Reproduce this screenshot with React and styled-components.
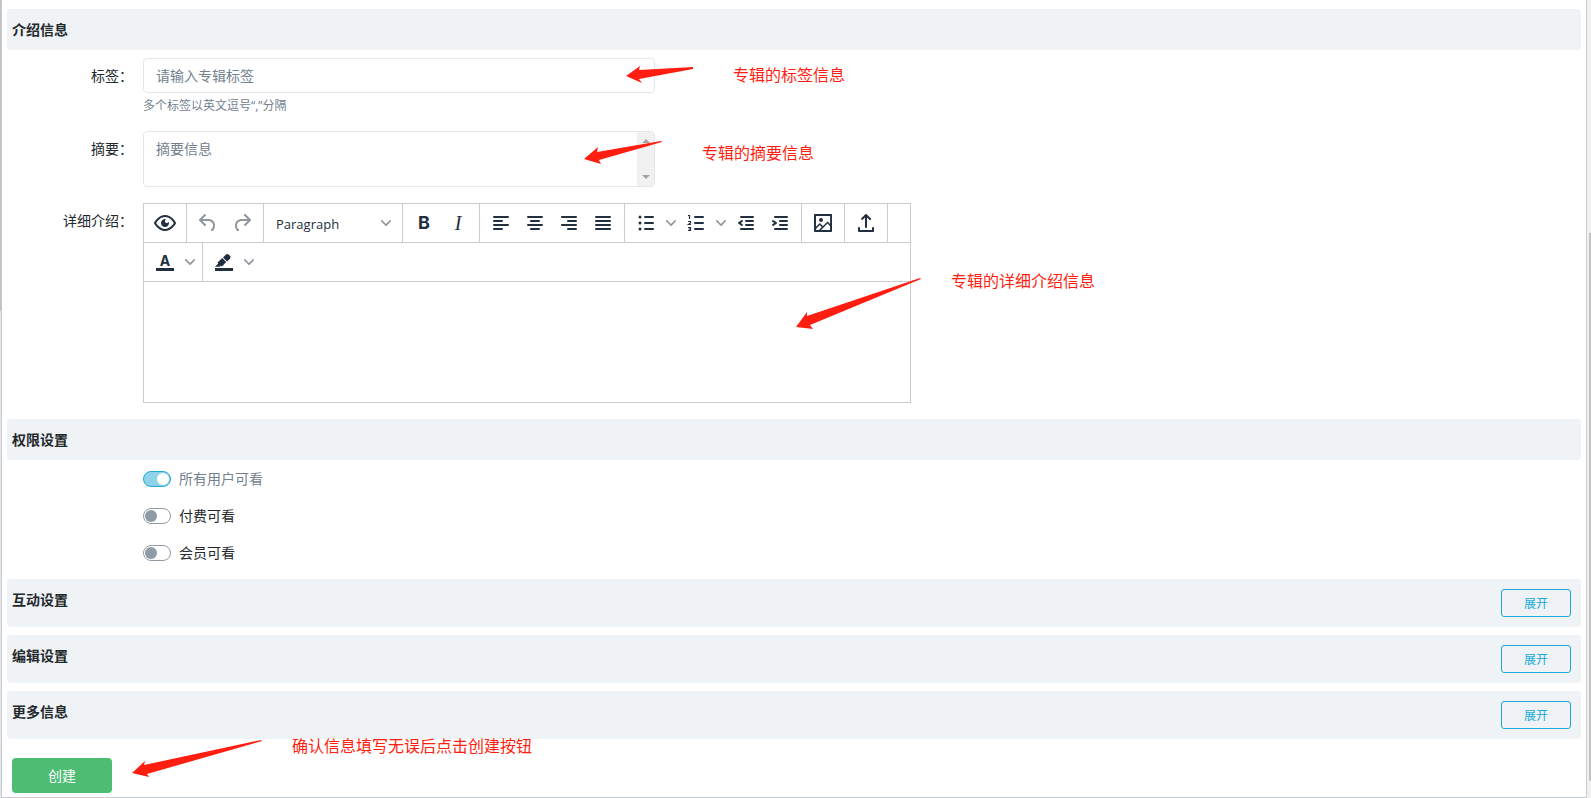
import { useState } from "react";
import styled, { createGlobalStyle } from "styled-components";

const GlobalStyle = createGlobalStyle`
  :root {
    --text: #23282c;
    --muted: #73818f;
    --primary: #20a8d8;
    --success: #4dbd74;
    --bar: #eff3f6;
    --field-border: #e4e7ea;
    --editor-border: #cccccc;
    --editor-icon: #222f3e;
    --note: #ff1e10;
  }
  * {
    box-sizing: border-box;
  }
  body {
    margin: 0;
    background: #ffffff;
    color: var(--text);
    font-family: "Noto Sans CJK SC", sans-serif;
    font-size: 14px;
    line-height: 21px;
  }
  button, input, textarea, select {
    font: inherit;
    color: inherit;
  }
`;

const Page = styled.div`
  display: flex;
  min-height: 100vh;
`;

const Panel = styled.main`
  flex: 1;
  min-width: 0;
  padding: 9px 5px 4px;
  border: 1px solid #c8ccd2;
  border-top: 0;
`;

const MenuRail = styled.div`
  width: 1px;
  padding-bottom: 487px;
  background: #e4e7ea;
  display: flex;
`;

const ScrollRail = styled.div`
  width: 4px;
  padding: 233px 0 17px 2px;
  background: #f0f0f0;
  display: flex;
`;

const ScrollThumb = styled.div`
  flex: 1;
  background: #c1c1c1;
`;

const SectionBar = styled.header`
  display: flex;
  justify-content: space-between;
  align-items: flex-start;
  padding: 10px 10px 10px 5px;
  margin-bottom: 8px;
  border-radius: 4px;
  background: var(--bar);
`;

const SectionTitle = styled.h2`
  margin: 0;
  font-size: 14px;
  font-weight: 700;
  line-height: 21px;
`;

const ExpandButton = styled.button`
  width: 70px;
  height: 28px;
  padding: 0;
  font-size: 12px;
  line-height: 18px;
  color: var(--primary);
  background: transparent;
  border: 1px solid var(--primary);
  border-radius: 3px;
`;

const Row = styled.div`
  display: grid;
  grid-template-columns: 126px minmax(0, 1fr);
  column-gap: 10px;
  margin-bottom: 16px;
`;

const RowLabel = styled.label`
  padding-top: 7px;
  text-align: right;
`;

const Field = styled.div`
  position: relative;
  grid-column: 2;
`;

const TextInput = styled.input`
  display: block;
  width: 100%;
  max-width: 512px;
  height: 35px;
  padding: 5px 12px 7px;
  border: 1px solid var(--field-border);
  border-radius: 4px;
  outline: 0;
  &::placeholder {
    color: var(--muted);
    opacity: 1;
  }
`;

const Hint = styled.small`
  display: block;
  margin-top: 4px;
  font-family: "Open Sans", "Noto Sans CJK SC", sans-serif;
  font-size: 12px;
  line-height: 18px;
  color: var(--muted);
`;

const AreaShell = styled.div`
  display: flex;
  max-width: 512px;
  height: 56px;
  overflow: hidden;
  border: 1px solid var(--field-border);
  border-radius: 4px;
`;

const Area = styled.textarea`
  flex: 1;
  min-width: 0;
  padding: 6px 12px;
  border: 0;
  outline: 0;
  resize: none;
  background: transparent;
  &::placeholder {
    color: var(--muted);
    opacity: 1;
  }
`;

const AreaRail = styled.div`
  display: flex;
  flex-direction: column;
  justify-content: space-between;
  align-items: center;
  width: 17px;
  padding: 7px 0;
  background: #f1f1f1;
`;

const Editor = styled.div`
  max-width: 768px;
  border: 1px solid var(--editor-border);
`;

const ToolbarRow = styled.div`
  display: flex;
  height: 39px;
  border-bottom: 1px solid var(--editor-border);
`;

const ToolGroup = styled.div`
  display: flex;
  align-items: center;
  padding: 0 4px;
  border-right: ${({ $last }) => ($last ? "0" : "1px solid var(--editor-border)")};
`;

const ToolButton = styled.button`
  display: flex;
  align-items: center;
  justify-content: center;
  width: ${({ $arrow }) => ($arrow ? "16px" : "34px")};
  height: 34px;
  padding: 0;
  border: 0;
  background: transparent;
  color: var(--editor-icon);
  opacity: ${({ disabled }) => (disabled ? 0.5 : 1)};
  svg {
    fill: currentColor;
  }
`;

const LetterB = styled.b`
  font: 700 18px/24px Inter, sans-serif;
`;

const LetterI = styled.i`
  font: italic 400 20px/24px "Liberation Serif", serif;
`;

const ColorMark = styled.span`
  width: 18px;
  height: 18px;
  border-bottom: 3px solid currentColor;
  font: 700 14px/15px Inter, sans-serif;
  text-align: center;
`;

const SelectWrap = styled.div`
  display: flex;
  align-items: center;
  width: 130px;
  height: 34px;
  padding-right: 7px;
  color: var(--editor-icon);
`;

const BlockSelect = styled.select`
  flex: 1;
  min-width: 0;
  height: 34px;
  padding: 2px 0 0 8px;
  border: 0;
  outline: 0;
  appearance: none;
  background: transparent;
  font: 13px/20px "Open Sans", sans-serif;
`;

const EditArea = styled.div`
  height: 120px;
  outline: 0;
`;

const SwitchList = styled.div`
  display: grid;
  row-gap: 16px;
  padding: 0 0 16px 136px;
`;

const SwitchLabel = styled.label`
  display: flex;
  align-items: center;
  gap: 8px;
  color: ${({ $muted }) => ($muted ? "var(--muted)" : "inherit")};
`;

const Switch = styled.input`
  display: flex;
  align-items: center;
  width: 28px;
  height: 16px;
  margin: 0;
  padding: 0 1px;
  appearance: none;
  border: 1px solid #8f9ba6;
  border-radius: 8px;
  background: #ffffff;
  &::before {
    content: "";
    width: 12px;
    height: 12px;
    border-radius: 50%;
    background: #8f9ba6;
  }
  &:checked {
    justify-content: flex-end;
    border-color: var(--primary);
    background: #8fd3eb;
  }
  &:checked::before {
    background: #ffffff;
  }
`;

const Footer = styled.footer`
  position: relative;
  padding: 11px 5px 0;
`;

const CreateButton = styled.button`
  width: 100px;
  height: 35px;
  padding: 0;
  border: 0;
  border-radius: 4px;
  color: #ffffff;
  background: var(--success);
`;

const Note = styled.div`
  position: absolute;
  left: ${({ $left }) => $left}px;
  top: ${({ $top }) => $top}px;
  display: flex;
  align-items: flex-start;
  gap: ${({ $wide }) => ($wide ? 40 : 30)}px;
  color: var(--note);
  font-size: 16px;
  line-height: 16px;
  white-space: nowrap;
  pointer-events: none;
  svg {
    flex: none;
    overflow: visible;
    fill: currentColor;
  }
`;

const Icon = ({ children, ...rest }) => (
  <svg width="24" height="24" viewBox="0 0 24 24" aria-hidden="true" {...rest}>
    {children}
  </svg>
);

// each line is [x1, x2, y]
const Lines = ({ lines }) =>
  lines.map(([x1, x2, y]) => (
    <rect key={y} x={x1} y={y - 1} width={x2 - x1} height="2" rx="1" />
  ));

const Chevron = () => (
  <svg width="10" height="10" viewBox="0 0 10 10" fill="currentColor" opacity=".5" aria-hidden="true">
    <path d="M8.7 2.2c.3-.3.8-.3 1 0 .4.4.4.9 0 1.2L5.7 7.8c-.3.3-.9.3-1.2 0L.2 3.4a.8.8 0 0 1 0-1.2c.3-.3.8-.3 1.1 0L5 6l3.7-3.8z" />
  </svg>
);

const icons = {
  preview: (
    <path
      fillRule="evenodd"
      d="M3.5 12.5c.5.8 1.1 1.6 1.8 2.3 2 2 4.2 3.2 6.7 3.2s4.7-1.2 6.7-3.2a16.2 16.2 0 0 0 2.1-2.8 15.7 15.7 0 0 0-2.1-2.8c-2-2-4.2-3.2-6.7-3.2a9.3 9.3 0 0 0-6.7 3.2A16.2 16.2 0 0 0 3.2 12c0 .2.2.3.3.5zm-2.4-1l.7-1.2L4 7.8C6.2 5.4 8.9 4 12 4c3 0 5.8 1.4 8.1 3.8a18.2 18.2 0 0 1 2.8 3.7v1l-.7 1.2a18.2 18.2 0 0 1-2.1 2.5c-2.3 2.4-5 3.8-8.1 3.8-3 0-5.8-1.4-8.1-3.8a18.2 18.2 0 0 1-2.8-3.7 1 1 0 0 1 0-1zm12-3.3a2 2 0 1 0 2.7 2.6 4 4 0 1 1-2.6-2.6z"
    />
  ),
  undo: (
    <path d="M6.4 8H12c3.7 0 6.2 2 6.8 5.1.6 2.7-.4 5.6-2.3 6.8a1 1 0 0 1-1-1.8c1.1-.6 1.8-2.7 1.4-4.6-.5-2.1-2.1-3.5-4.9-3.5H6.4l3.3 3.3a1 1 0 1 1-1.4 1.4l-5-5a1 1 0 0 1 0-1.4l5-5a1 1 0 0 1 1.4 1.4L6.4 8z" />
  ),
  redo: (
    <path d="M17.6 10H12c-2.8 0-4.4 1.4-4.9 3.5-.4 2 .3 4 1.4 4.6a1 1 0 1 1-1 1.8c-2-1.2-2.9-4.1-2.3-6.8.6-3 3-5.1 6.8-5.1h5.6l-3.3-3.3a1 1 0 1 1 1.4-1.4l5 5a1 1 0 0 1 0 1.4l-5 5a1 1 0 0 1-1.4-1.4l3.3-3.3z" />
  ),
  left: <Lines lines={[[4, 20, 6], [4, 14, 10], [4, 20, 14], [4, 14, 18]]} />,
  center: <Lines lines={[[4, 20, 6], [7, 17, 10], [4, 20, 14], [7, 17, 18]]} />,
  right: <Lines lines={[[4, 20, 6], [10, 20, 10], [4, 20, 14], [10, 20, 18]]} />,
  justify: <Lines lines={[[4, 20, 6], [4, 20, 10], [4, 20, 14], [4, 20, 18]]} />,
  bullets: (
    <>
      <circle cx="6" cy="6" r="1.5" />
      <circle cx="6" cy="12" r="1.5" />
      <circle cx="6" cy="18" r="1.5" />
      <Lines lines={[[10, 20, 6], [10, 20, 12], [10, 20, 18]]} />
    </>
  ),
  numbers: (
    <>
      <Lines lines={[[10, 20, 6], [10, 20, 12], [10, 20, 18]]} />
      <g fill="none" stroke="currentColor" strokeWidth="1.2">
        <path d="M4 4.500h1.500V8" />
        <path d="M4 10.500h2.500V12L4.500 13.500H7" />
        <path d="M4 16.500h2.500v3H4M4.500 18h2" />
      </g>
    </>
  ),
  outdent: (
    <>
      <Lines lines={[[6, 20, 6], [11, 20, 10], [11, 20, 14], [6, 20, 18]]} />
      <path d="M8.600 13.200a1 1 0 0 1-1.200 1.600l-3-2a1 1 0 0 1 0-1.600l3-2a1 1 0 0 1 1.200 1.600L6.800 12l1.800 1.200z" />
    </>
  ),
  indent: (
    <>
      <Lines lines={[[6, 20, 6], [11, 20, 10], [11, 20, 14], [6, 20, 18]]} />
      <path d="M4.400 13.200L6.200 12l-1.800-1.200a1 1 0 0 1 1.200-1.600l3 2a1 1 0 0 1 0 1.600l-3 2a1 1 0 1 1-1.200-1.600z" />
    </>
  ),
  image: (
    <path
      fillRule="evenodd"
      d="M5 15.700l3.300-3.200c.3-.3.7-.3 1 0L12 15l4.100-4c.3-.4.8-.4 1 0l2 1.900V5H5v10.700zM5 18V19h3l2.800-2.900-2-2L5 17.900zm14-3l-2.500-2.400-6.400 6.500H19v-4zM4 3h16c.6 0 1 .4 1 1v16c0 .6-.4 1-1 1H4a1 1 0 0 1-1-1V4c0-.6.4-1 1-1zm6 8a2 2 0 1 0 0-4 2 2 0 0 0 0 4z"
    />
  ),
  upload: (
    <path d="M18 19v-2a1 1 0 0 1 2 0v3c0 .6-.4 1-1 1H5a1 1 0 0 1-1-1v-3a1 1 0 0 1 2 0v2h12zM11 6.400L8.700 8.700a1 1 0 0 1-1.400-1.400l4-4a1 1 0 0 1 1.400 0l4 4a1 1 0 1 1-1.400 1.400L13 6.400V16a1 1 0 0 1-2 0V6.400z" />
  ),
  marker: (
    <>
      <rect x="3" y="18" width="18" height="3" />
      <path d="M7.700 16.700H3l3.300-3.300-.7-.8L10.200 8l4 4.100-4 4.200c-.2.2-.6.2-.8 0l-.6-.7-1.100 1.100zm5-7.500L11 7.400l3-2.900a2 2 0 0 1 2.600 0L18 6c.7.7.7 2 0 2.700l-2.900 2.900-1.800-1.800-.5-.6" />
    </>
  ),
};

const Tool = ({ name, title, disabled }) => (
  <ToolButton type="button" title={title} aria-label={title} disabled={disabled}>
    <Icon>{icons[name]}</Icon>
  </ToolButton>
);

const ArrowTool = ({ title }) => (
  <ToolButton type="button" $arrow aria-label={title}>
    <Chevron />
  </ToolButton>
);

const Arrow = ({ width, height, points }) => (
  <svg width={width} height={height} viewBox={`0 0 ${width} ${height}`} aria-hidden="true">
    <polygon points={points} />
  </svg>
);

const Collapsed = ({ title }) => (
  <SectionBar>
    <SectionTitle>{title}</SectionTitle>
    <ExpandButton type="button">展开</ExpandButton>
  </SectionBar>
);

const RichEditor = () => (
  <Editor>
    <ToolbarRow>
      <ToolGroup>
        <Tool name="preview" title="预览" />
      </ToolGroup>
      <ToolGroup>
        <Tool name="undo" title="撤销" disabled />
        <Tool name="redo" title="重做" disabled />
      </ToolGroup>
      <ToolGroup>
        <SelectWrap>
          <BlockSelect aria-label="段落格式">
            <option>Paragraph</option>
          </BlockSelect>
          <Chevron />
        </SelectWrap>
      </ToolGroup>
      <ToolGroup>
        <ToolButton type="button" title="粗体">
          <LetterB>B</LetterB>
        </ToolButton>
        <ToolButton type="button" title="斜体">
          <LetterI>I</LetterI>
        </ToolButton>
      </ToolGroup>
      <ToolGroup>
        <Tool name="left" title="左对齐" />
        <Tool name="center" title="居中" />
        <Tool name="right" title="右对齐" />
        <Tool name="justify" title="两端对齐" />
      </ToolGroup>
      <ToolGroup>
        <Tool name="bullets" title="项目符号" />
        <ArrowTool title="项目符号样式" />
        <Tool name="numbers" title="编号" />
        <ArrowTool title="编号样式" />
        <Tool name="outdent" title="减少缩进" />
        <Tool name="indent" title="增加缩进" />
      </ToolGroup>
      <ToolGroup>
        <Tool name="image" title="图片" />
      </ToolGroup>
      <ToolGroup>
        <Tool name="upload" title="上传" />
      </ToolGroup>
    </ToolbarRow>
    <ToolbarRow>
      <ToolGroup>
        <ToolButton type="button" title="文字颜色">
          <ColorMark>A</ColorMark>
        </ToolButton>
        <ArrowTool title="选择文字颜色" />
      </ToolGroup>
      <ToolGroup $last>
        <Tool name="marker" title="背景颜色" />
        <ArrowTool title="选择背景颜色" />
      </ToolGroup>
    </ToolbarRow>
    <EditArea role="textbox" aria-labelledby="detail-label" contentEditable suppressContentEditableWarning />
  </Editor>
);

export default function App() {
  const [paid, setPaid] = useState(false);
  const [member, setMember] = useState(false);

  return (
    <>
      <GlobalStyle />
      <Page>
        <MenuRail aria-hidden="true">
          <ScrollThumb />
        </MenuRail>
        <Panel>
          <SectionBar>
            <SectionTitle>介绍信息</SectionTitle>
          </SectionBar>
          <Row>
            <RowLabel htmlFor="tags">标签：</RowLabel>
            <Field>
              <TextInput id="tags" type="text" placeholder="请输入专辑标签" />
              <Hint>多个标签以英文逗号“,”分隔</Hint>
              <Note $left={483} $top={8} $wide>
                <Arrow width={67} height={18} points="0,10 14,0 13,4 67,1 67,3 13,13 16,17" />
                专辑的标签信息
              </Note>
            </Field>
          </Row>
          <Row>
            <RowLabel htmlFor="summary">摘要：</RowLabel>
            <Field>
              <AreaShell>
                <Area id="summary" placeholder="摘要信息" />
                <AreaRail aria-hidden="true">
                  <svg width="8" height="4" fill="#a3a3a3"><path d="M0 4l4-4 4 4z" /></svg>
                  <svg width="8" height="4" fill="#a3a3a3"><path d="M0 0l4 4 4-4z" /></svg>
                </AreaRail>
              </AreaShell>
              <Note $left={441} $top={13} $wide>
                <Arrow width={78} height={21} points="0,15 14,3 13,8 77,-3 78,-2 15,16 17,20" />
                专辑的摘要信息
              </Note>
            </Field>
          </Row>
          <Row>
            <RowLabel as="div" id="detail-label">详细介绍：</RowLabel>
            <Field>
              <RichEditor />
              <Note $left={653} $top={69}>
                <Arrow width={125} height={57} points="0,55 11,40 11,44 124,6 125,7 14,53 17,57" />
                专辑的详细介绍信息
              </Note>
            </Field>
          </Row>

          <SectionBar>
            <SectionTitle>权限设置</SectionTitle>
          </SectionBar>
          <SwitchList>
            <SwitchLabel $muted>
              <Switch type="checkbox" role="switch" checked disabled readOnly />
              所有用户可看
            </SwitchLabel>
            <SwitchLabel>
              <Switch type="checkbox" role="switch" checked={paid} onChange={() => setPaid(!paid)} />
              付费可看
            </SwitchLabel>
            <SwitchLabel>
              <Switch type="checkbox" role="switch" checked={member} onChange={() => setMember(!member)} />
              会员可看
            </SwitchLabel>
          </SwitchList>

          <Collapsed title="互动设置" />
          <Collapsed title="编辑设置" />
          <Collapsed title="更多信息" />

          <Footer>
            <CreateButton type="button">创建</CreateButton>
            <Note $left={125} $top={-10}>
              <Arrow width={130} height={40} points="0,36 13,24 12,28 129,3 130,4 15,37 17,40" />
              确认信息填写无误后点击创建按钮
            </Note>
          </Footer>
        </Panel>
        <ScrollRail aria-hidden="true">
          <ScrollThumb />
        </ScrollRail>
      </Page>
    </>
  );
}
